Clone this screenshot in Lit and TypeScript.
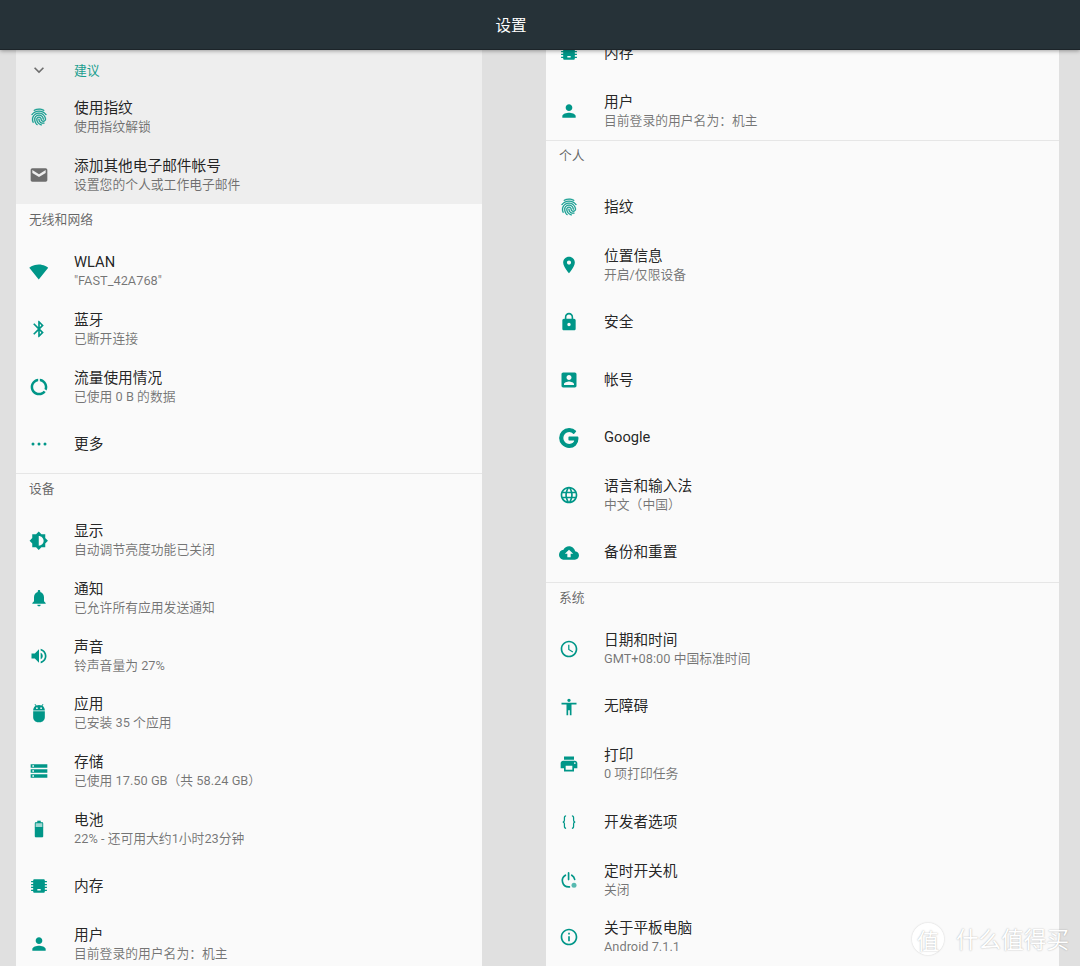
import { LitElement, html, css, svg } from "lit";
import { customElement } from "lit/decorators.js";

const P = (d: string) => svg`<path d=${d}></path>`;

const icons: Record<string, unknown> = {
  chevron: P("M16.59 8.59L12 13.17 7.41 8.59 6 10l6 6 6-6z"),
  fingerprint: svg`<path stroke="currentColor" stroke-width=".45" d="M17.81 4.47c-.08 0-.16-.02-.23-.06C15.66 3.42 14 3 12.01 3c-1.98 0-3.86.47-5.57 1.41-.24.13-.54.04-.68-.2-.13-.24-.04-.55.2-.68C7.82 2.52 9.86 2 12.01 2c2.13 0 3.99.47 6.03 1.52.25.13.34.43.21.67-.09.18-.26.28-.44.28zM3.5 9.72c-.1 0-.2-.03-.29-.09-.23-.16-.28-.47-.12-.7.99-1.4 2.25-2.5 3.75-3.27C9.98 4.04 14 4.03 17.15 5.65c1.5.77 2.76 1.86 3.75 3.25.16.22.11.54-.12.7-.23.16-.54.11-.7-.12-.9-1.26-2.04-2.25-3.39-2.94-2.87-1.47-6.54-1.47-9.4.01-1.36.7-2.5 1.7-3.4 2.96-.08.14-.23.21-.39.21zm6.25 12.07c-.13 0-.26-.05-.35-.15-.87-.87-1.34-1.43-2.01-2.64-.69-1.23-1.05-2.73-1.05-4.34 0-2.97 2.54-5.39 5.66-5.39s5.66 2.42 5.66 5.39c0 .28-.22.5-.5.5s-.5-.22-.5-.5c0-2.42-2.09-4.39-4.66-4.39-2.57 0-4.66 1.97-4.66 4.39 0 1.44.32 2.77.93 3.85.64 1.15 1.08 1.64 1.85 2.42.19.2.19.51 0 .71-.11.1-.24.15-.37.15zm7.17-1.85c-1.19 0-2.24-.3-3.1-.89-1.49-1.01-2.38-2.65-2.38-4.39 0-.28.22-.5.5-.5s.5.22.5.5c0 1.41.72 2.74 1.94 3.56.71.48 1.54.71 2.54.71.24 0 .64-.03 1.04-.1.27-.05.53.13.58.41.05.27-.13.53-.41.58-.57.11-1.07.12-1.21.12zM14.91 22c-.04 0-.09-.01-.13-.02-1.59-.44-2.63-1.03-3.72-2.1-1.4-1.39-2.17-3.24-2.17-5.22 0-1.62 1.38-2.94 3.08-2.94 1.7 0 3.08 1.32 3.08 2.94 0 1.07.93 1.94 2.08 1.94s2.08-.87 2.08-1.94c0-3.77-3.25-6.83-7.25-6.83-2.84 0-5.44 1.58-6.61 4.03-.39.81-.59 1.76-.59 2.8 0 .78.07 2.01.67 3.61.1.26-.03.55-.29.64-.26.1-.55-.04-.64-.29-.49-1.31-.73-2.61-.73-3.96 0-1.2.23-2.29.68-3.24 1.33-2.79 4.28-4.6 7.51-4.6 4.55 0 8.25 3.51 8.25 7.83 0 1.62-1.38 2.94-3.08 2.94s-3.08-1.32-3.08-2.94c0-1.07-.93-1.94-2.08-1.94s-2.08.87-2.08 1.94c0 1.71.66 3.31 1.87 4.51.95.94 1.86 1.46 3.27 1.85.27.07.42.35.35.61-.05.23-.26.38-.47.38z"></path>`,
  mail: P("M20 4H4c-1.1 0-2 .9-2 2v12c0 1.1.9 2 2 2h16c1.1 0 2-.9 2-2V6c0-1.1-.9-2-2-2zm0 5.5l-8 5-8-5V6l8 5 8-5v3.500z"),
  wifi: P("M12.01 21.49L23.64 7c-.45-.34-4.93-4-11.64-4C5.28 3 .81 6.66.36 7l11.63 14.49.01.01.01-.01z"),
  bluetooth: P("M17.71 7.71L12 2h-1v7.59L6.41 5 5 6.41 10.59 12 5 17.59 6.41 19 11 14.41V22h1l5.71-5.71-4.3-4.29 4.3-4.29zM13 5.83l1.88 1.88L13 9.59V5.83zm1.88 10.46L13 18.17v-3.76l1.88 1.88z"),
  data: P("M13 2.05v3.03c3.39.49 6 3.39 6 6.92 0 .9-.18 1.75-.48 2.54l2.6 1.53c.56-1.24.88-2.62.88-4.07 0-5.18-3.95-9.45-9-9.95zM12 19c-3.87 0-7-3.13-7-7 0-3.53 2.61-6.43 6-6.92V2.05c-5.06.5-9 4.76-9 9.95 0 5.52 4.47 10 9.99 10 3.31 0 6.24-1.61 8.06-4.09l-2.6-1.53C16.17 17.98 14.21 19 12 19z"),
  more: svg`<circle cx="4.8" cy="12" r="1.8"></circle><circle cx="12" cy="12" r="1.8"></circle><circle cx="19.2" cy="12" r="1.8"></circle>`,
  brightness: P("M20 15.31L23.31 12 20 8.69V4h-4.69L12 .69 8.69 4H4v4.69L.69 12 4 15.31V20h4.69L12 23.31 15.31 20H20v-4.69zM12 18V6c3.31 0 6 2.69 6 6s-2.69 6-6 6z"),
  bell: P("M12 22c1.1 0 2-.9 2-2h-4c0 1.1.89 2 2 2zm6-6v-5c0-3.07-1.64-5.64-4.5-6.32V4c0-.83-.67-1.5-1.5-1.5s-1.5.67-1.5 1.5v.68C7.63 5.36 6 7.92 6 11v5l-2 2v1h16v-1l-2-2z"),
  volume: P("M3 9v6h4l5 5V4L7 9H3zm13.5 3c0-1.77-1.02-3.29-2.5-4.03v8.05c1.48-.73 2.5-2.25 2.5-4.02zM14 3.23v2.06c2.89.86 5 3.54 5 6.71s-2.11 5.85-5 6.71v2.06c4.01-.91 7-4.49 7-8.77s-2.99-7.86-7-8.77z"),
  android: P("M5 10h14v7c0 3.3-2.7 6-6 6h-2c-3.3 0-6-2.7-6-6v-7zM5 9c0-2.4 1.2-4.4 3-5.6L6.6 2l.8-.8L9.1 2.9C10 2.5 11 2.3 12 2.3s2 .2 2.9.6l1.7-1.7.8.8L16 3.4C17.8 4.6 19 6.6 19 9H5zm4.5-3.8a1 1 0 1 0 0 2 1 1 0 0 0 0-2zm5 0a1 1 0 1 0 0 2 1 1 0 0 0 0-2z"),
  storage: P("M2 20h20v-4H2v4zm2-3h2v2H4v-2zM2 4v4h20V4H2zm4 3H4V5h2v2zm-4 7h20v-4H2v4zm2-3h2v2H4v-2z"),
  battery: svg`<path d="M15.67 4H14V2h-4v2H8.33C7.6 4 7 4.6 7 5.33v15.33C7 21.4 7.6 22 8.33 22h7.33c.74 0 1.34-.6 1.34-1.33V5.33C17 4.6 16.4 4 15.67 4z" opacity=".35"></path><path d="M7 9.5h10v11.17c0 .73-.6 1.33-1.34 1.33H8.33C7.6 22 7 21.4 7 20.67V9.5z"></path><path d="M15.67 4H14V2h-4v2H8.33C7.6 4 7 4.6 7 5.33V10h1V5h8v5h1V5.33C17 4.6 16.4 4 15.67 4z"></path>`,
  memory: P("M5 5.5c0-.8.7-1.5 1.5-1.5h11c.8 0 1.5.7 1.5 1.5V6h2.5v1.5H19v2h2.5V11H19v2h2.5v1.500H19v2h2.500V18H19v.5c0 .8-.7 1.500-1.500 1.500h-11c-.8 0-1.500-.7-1.500-1.500V18H2.500v-1.500H5v-2H2.500V13H5v-2H2.500V9.500H5v-2H2.500V6H5v-.5zM10 15.500v2h4v-2h-4z"),
  person: P("M12 12c2.21 0 4-1.79 4-4s-1.79-4-4-4-4 1.79-4 4 1.79 4 4 4zm0 2c-2.67 0-8 1.34-8 4v2h16v-2c0-2.66-5.33-4-8-4z"),
  location: P("M12 2C8.13 2 5 5.13 5 9c0 5.25 7 13 7 13s7-7.75 7-13c0-3.87-3.13-7-7-7zm0 9.5c-1.38 0-2.5-1.12-2.5-2.5s1.12-2.5 2.5-2.5 2.5 1.12 2.5 2.5-1.12 2.5-2.5 2.5z"),
  lock: P("M18 8h-1V6c0-2.76-2.24-5-5-5S7 3.24 7 6v2H6c-1.1 0-2 .9-2 2v10c0 1.1.9 2 2 2h12c1.1 0 2-.9 2-2V10c0-1.1-.9-2-2-2zm-6 9c-1.1 0-2-.9-2-2s.9-2 2-2 2 .9 2 2-.9 2-2 2zm3.1-9H8.9V6c0-1.71 1.39-3.1 3.1-3.1 1.71 0 3.1 1.39 3.1 3.1v2z"),
  account: P("M3 5v14c0 1.1.89 2 2 2h14c1.1 0 2-.9 2-2V5c0-1.1-.9-2-2-2H5c-1.11 0-2 .9-2 2zm12 4c0 1.66-1.34 3-3 3s-3-1.34-3-3 1.34-3 3-3 3 1.34 3 3zm-9 8c0-2 4-3.1 6-3.1s6 1.1 6 3.1v1H6v-1z"),
  google: svg`<path stroke="currentColor" stroke-width="1.6" stroke-linejoin="round" d="M21.35 11.1H12.18V13.83H18.69C18.36 17.64 15.19 19.27 12.19 19.27C8.36 19.27 5 16.25 5 12C5 7.9 8.2 4.73 12.2 4.73C15.29 4.73 17.1 6.7 17.1 6.7L19 4.72C19 4.72 16.56 2 12.1 2C6.42 2 2.03 6.8 2.03 12C2.03 17.05 6.16 22 12.25 22C17.6 22 21.5 18.33 21.5 12.91C21.5 11.76 21.35 11.1 21.35 11.1V11.1Z"></path>`,
  language: P("M11.99 2C6.47 2 2 6.48 2 12s4.47 10 9.99 10C17.52 22 22 17.52 22 12S17.52 2 11.99 2zm6.93 6h-2.95c-.32-1.25-.78-2.45-1.38-3.56 1.84.63 3.37 1.91 4.33 3.56zM12 4.04c.83 1.2 1.48 2.53 1.91 3.96h-3.82c.43-1.43 1.08-2.76 1.91-3.96zM4.26 14C4.1 13.36 4 12.69 4 12s.1-1.36.26-2h3.38c-.08.66-.14 1.32-.14 2 0 .68.06 1.34.14 2H4.26zm.82 2h2.95c.32 1.25.78 2.45 1.38 3.56-1.84-.63-3.37-1.9-4.33-3.56zm2.95-8H5.08c.96-1.66 2.49-2.93 4.33-3.56C8.81 5.55 8.35 6.75 8.03 8zM12 19.96c-.83-1.2-1.48-2.53-1.91-3.96h3.82c-.43 1.43-1.08 2.76-1.91 3.96zM14.34 14H9.66c-.09-.66-.16-1.32-.16-2 0-.68.07-1.35.16-2h4.68c.09.65.16 1.32.16 2 0 .68-.07 1.34-.16 2zm.25 5.56c.6-1.11 1.06-2.31 1.38-3.56h2.95c-.96 1.65-2.49 2.93-4.33 3.56zM16.36 14c.08-.66.14-1.32.14-2 0-.68-.06-1.34-.14-2h3.38c.16.64.26 1.31.26 2s-.1 1.36-.26 2h-3.38z"),
  cloud: P("M19.35 10.04C18.67 6.59 15.64 4 12 4 9.11 4 6.6 5.64 5.35 8.04 2.34 8.36 0 10.91 0 14c0 3.31 2.69 6 6 6h13c2.76 0 5-2.24 5-5 0-2.64-2.05-4.78-4.65-4.96zM14 13v4h-4v-4H7l5-5 5 5h-3z"),
  clock: P("M11.99 2C6.47 2 2 6.48 2 12s4.47 10 9.99 10C17.52 22 22 17.52 22 12S17.52 2 11.99 2zM12 20c-4.42 0-8-3.58-8-8s3.58-8 8-8 8 3.58 8 8-3.58 8-8 8zm.5-13H11v6l5.25 3.15.75-1.23-4.5-2.67z"),
  access: P("M12 2c1.1 0 2 .9 2 2s-.9 2-2 2-2-.9-2-2 .9-2 2-2zm9 7h-6v13h-2v-6h-2v6H9V9H3V7h18v2z"),
  print: P("M19 8H5c-1.66 0-3 1.34-3 3v6h4v4h12v-4h4v-6c0-1.66-1.34-3-3-3zm-3 11H8v-5h8v5zm3-7c-.55 0-1-.45-1-1s.45-1 1-1 1 .45 1 1-.45 1-1 1zm-1-9H6v4h12V3z"),
  braces: svg`<g fill="none" stroke="currentColor" stroke-width="1.5"><path d="M8.5 4.5C6.5 4.5 6.5 5.5 6.5 7v3c0 1.2-.6 2-2 2 1.4 0 2 .8 2 2v3c0 1.5 0 2.5 2 2.5"></path><path d="M15.5 4.5c2 0 2 1 2 2.5v3c0 1.2.6 2 2 2-1.4 0-2 .8-2 2v3c0 1.5 0 2.5-2 2.5"></path></g>`,
  power: svg`<g fill="none" stroke="currentColor" stroke-width="2" stroke-linecap="round"><path d="M11.5 3.5v8"></path><path d="M15.3 6.2a7.4 7.4 0 0 1 3.500 5"></path><path d="M7.700 6.200A7.600 7.600 0 0 0 11.500 20.300h1"></path></g><circle cx="18" cy="18.300" r="3" opacity=".65"></circle>`,
  info: P("M11 17h2v-6h-2v6zm1-15C6.48 2 2 6.48 2 12s4.48 10 10 10 10-4.48 10-10S17.52 2 12 2zm0 18c-4.41 0-8-3.59-8-8s3.59-8 8-8 8 3.59 8 8-3.59 8-8 8zM11 9h2V7h-2v2z"),
};

type Row = { i: string; t: string; s?: string };
type Block =
  | { kind: "section"; label: string; rule?: boolean }
  | { kind: "row"; row: Row };

const R = (i: string, t: string, s?: string): Block => ({ kind: "row", row: { i, t, s } });
const S = (label: string, rule = false): Block => ({ kind: "section", label, rule });

const leftBlocks: Block[] = [
  S("无线和网络"),
  R("wifi", "WLAN", '"FAST_42A768"'),
  R("bluetooth", "蓝牙", "已断开连接"),
  R("data", "流量使用情况", "已使用 0 B 的数据"),
  R("more", "更多"),
  S("设备", true),
  R("brightness", "显示", "自动调节亮度功能已关闭"),
  R("bell", "通知", "已允许所有应用发送通知"),
  R("volume", "声音", "铃声音量为 27%"),
  R("android", "应用", "已安装 35 个应用"),
  R("storage", "存储", "已使用 17.50 GB（共 58.24 GB）"),
  R("battery", "电池", "22% - 还可用大约1小时23分钟"),
  R("memory", "内存"),
  R("person", "用户", "目前登录的用户名为：机主"),
];

const rightBlocks: Block[] = [
  R("memory", "内存"),
  R("person", "用户", "目前登录的用户名为：机主"),
  S("个人", true),
  R("fingerprint", "指纹"),
  R("location", "位置信息", "开启/仅限设备"),
  R("lock", "安全"),
  R("account", "帐号"),
  R("google", "Google"),
  R("language", "语言和输入法", "中文（中国）"),
  R("cloud", "备份和重置"),
  S("系统", true),
  R("clock", "日期和时间", "GMT+08:00 中国标准时间"),
  R("access", "无障碍"),
  R("print", "打印", "0 项打印任务"),
  R("braces", "开发者选项"),
  R("power", "定时开关机", "关闭"),
  R("info", "关于平板电脑", "Android 7.1.1"),
];

@customElement("app-root")
export class AppRoot extends LitElement {
  static styles = css`
    :host {
      display: block;
      width: 1080px;
      height: 966px;
      overflow: hidden;
      position: relative;
      background: #e0e0e0;
      font-family: Roboto, "Noto Sans CJK SC", sans-serif;
    }
    .bar {
      position: relative;
      z-index: 2;
      height: 49px;
      background: #263238;
      border-bottom: 1px solid #1c2429;
      box-shadow: 0 1px 4px rgba(0, 0, 0, 0.35);
      display: flex;
      align-items: center;
      justify-content: center;
      color: #ffffff;
      font-size: 15.5px;
      padding-right: 58px;
    }
    .bar span { display: block; margin-bottom: 2px; }
    .columns {
      height: 916px;
      overflow: hidden;
      display: flex;
      align-items: flex-start;
      padding-left: 16px;
      gap: 64px;
    }
    .panel {
      background: #fafafa;
      flex: none;
    }
    .left { width: 466px; }
    .right { width: 513px; margin-top: -25.5px; }
    .suggest { background: #eeeeee; height: 154px; }
    .suggest-head {
      height: 38.5px;
      display: flex;
      align-items: center;
      font-size: 12.8px;
      color: #1a9e8f;
      padding-top: 1px;
      box-sizing: border-box;
    }
    .row {
      height: 57.65px;
      display: flex;
      align-items: center;
    }
    .ic {
      width: 58px;
      flex: none;
      display: flex;
      justify-content: center;
      padding-right: 13px;
      box-sizing: border-box;
      color: #009688;
    }
    .ic.grey { color: #6e6e6e; }
    .ic svg { display: block; width: 20px; height: 20px; fill: currentColor; }
    .ic svg.google { width: 22px; height: 22px; }
    .ic svg.brightness { width: 19.5px; height: 19.5px; }
    .ic svg.wifi { width: 19.5px; height: 19.5px; }
    .txt { display: flex; flex-direction: column; min-width: 0; }
    .txt.two { padding-top: 1px; }
    .t {
      font-size: 14.7px;
      line-height: 19px;
      color: rgba(0, 0, 0, 0.87);
    }
    .s {
      font-size: 12.8px;
      line-height: 18px;
      color: rgba(0, 0, 0, 0.54);
    }
    .section {
      height: 38.5px;
      box-sizing: border-box;
      display: flex;
      align-items: flex-start;
      padding: 8px 0 0 13px;
      font-size: 12.8px;
      line-height: 15px;
      color: rgba(0, 0, 0, 0.6);
    }
    .section.rule {
      padding-top: 7px;
      border-top: 1.5px solid #e6e6e6;
    }
    .mark {
      position: absolute;
      right: 11px;
      bottom: 11px;
      display: flex;
      align-items: center;
      gap: 12px;
      color: #ffffff;
      text-shadow: 0 0 1.5px rgba(0, 0, 0, 0.35);
    }
    .mark .badge {
      width: 32px;
      height: 32px;
      border-radius: 50%;
      background: rgba(255, 255, 255, 0.9);
      box-shadow: 0 0 2px rgba(0, 0, 0, 0.2);
      display: flex;
      align-items: center;
      justify-content: center;
      font-size: 22px;
    }
    .mark .name { font-size: 22.6px; }
  `;

  private icon(name: string, grey = false) {
    return html`<div class="ic ${grey ? "grey" : ""}">
      <svg class=${name} viewBox="0 0 24 24">${icons[name]}</svg>
    </div>`;
  }

  private renderRow(r: Row, grey = false) {
    return html`<div class="row">
      ${this.icon(r.i, grey)}
      <div class="txt ${r.s ? "two" : ""}">
        <div class="t">${r.t}</div>
        ${r.s ? html`<div class="s">${r.s}</div>` : ""}
      </div>
    </div>`;
  }

  private renderBlocks(list: Block[]) {
    return list.map((b) =>
      b.kind === "section"
        ? html`<div class="section ${b.rule ? "rule" : ""}">${b.label}</div>`
        : this.renderRow(b.row)
    );
  }

  render() {
    return html`
      <div class="bar"><span>设置</span></div>
      <div class="columns">
        <div class="panel left">
          <div class="suggest">
            <div class="suggest-head">
              ${this.icon("chevron", true)}
              <span>建议</span>
            </div>
            ${this.renderRow({ i: "fingerprint", t: "使用指纹", s: "使用指纹解锁" })}
            ${this.renderRow({ i: "mail", t: "添加其他电子邮件帐号", s: "设置您的个人或工作电子邮件" }, true)}
          </div>
          ${this.renderBlocks(leftBlocks)}
        </div>
        <div class="panel right">${this.renderBlocks(rightBlocks)}</div>
      </div>
      <div class="mark">
        <span class="badge">值</span>
        <span class="name">什么值得买</span>
      </div>
    `;
  }
}
